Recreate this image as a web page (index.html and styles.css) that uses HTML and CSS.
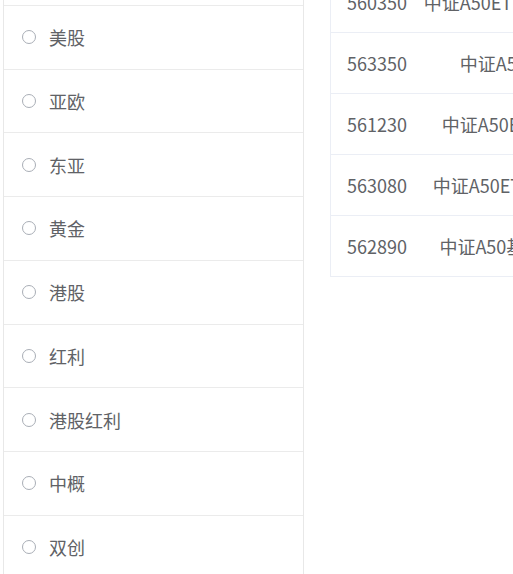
FILE: index.html
```html
<!DOCTYPE html>
<html lang="zh">
<head>
<meta charset="utf-8">
<link rel="stylesheet" href="styles.css">
</head>
<body>
<div class="page">
  <div class="panel">
    <ul class="options">
      <li class="option"><span class="radio"></span><span class="label">全部</span></li>
      <li class="option"><span class="radio"></span><span class="label">美股</span></li>
      <li class="option"><span class="radio"></span><span class="label">亚欧</span></li>
      <li class="option"><span class="radio"></span><span class="label">东亚</span></li>
      <li class="option"><span class="radio"></span><span class="label">黄金</span></li>
      <li class="option"><span class="radio"></span><span class="label">港股</span></li>
      <li class="option"><span class="radio"></span><span class="label">红利</span></li>
      <li class="option"><span class="radio"></span><span class="label">港股红利</span></li>
      <li class="option"><span class="radio"></span><span class="label">中概</span></li>
      <li class="option"><span class="radio"></span><span class="label">双创</span></li>
    </ul>
  </div>
  <div class="table-wrap">
    <table class="fund-table">
      <tbody>
        <tr><td class="code">560350</td><td class="name"><div class="name-inner">中证A50ETF工银瑞信</div></td></tr>
        <tr><td class="code">563350</td><td class="name"><div class="name-inner">中证A50ETF</div></td></tr>
        <tr><td class="code">561230</td><td class="name"><div class="name-inner">中证A50ETF华宝</div></td></tr>
        <tr><td class="code">563080</td><td class="name"><div class="name-inner">中证A50ETF易方达</div></td></tr>
        <tr><td class="code">562890</td><td class="name"><div class="name-inner">中证A50基金增强</div></td></tr>
      </tbody>
    </table>
  </div>
</div>
</body>
</html>
```

FILE: styles.css
```css
html, body {
  margin: 0;
  padding: 0;
  background: #ffffff;
  overflow: hidden;
}

body {
  font-family: "Noto Sans CJK SC", "Noto Sans", sans-serif;
  color: #606266;
  font-size: 18px;
}

.page {
  display: flex;
  align-items: flex-start;
  gap: 26px;
  padding-left: 3px;
  height: 574px;
}

.panel {
  flex: none;
  width: 299px;
  border-left: 1px solid #e8e8e8;
  border-right: 1px solid #e8e8e8;
  height: 640px;
  margin-top: -58px;
}

.options {
  list-style: none;
  margin: 0;
  padding: 0;
}

.option {
  display: flex;
  align-items: center;
  height: 62.75px;
  border-bottom: 1px solid #ebebeb;
  padding-left: 18px;
}

.radio {
  box-sizing: border-box;
  width: 14px;
  height: 14px;
  border: 1px solid #a9aeb6;
  border-radius: 50%;
  flex: none;
}

.label {
  margin-left: 13px;
  line-height: 1;
}

.table-wrap {
  flex: none;
  margin-top: -28px;
}

.fund-table {
  border-collapse: collapse;
  border-left: 1px solid #ebeef5;
  table-layout: fixed;
  width: 256px;
}

.fund-table td {
  height: 60px;
  padding: 0;
  border-bottom: 1px solid #ebeef5;
  white-space: nowrap;
  line-height: 1;
}

.fund-table .code {
  width: 84px;
  padding-left: 16px;
}

.fund-table .name {
  width: 153px;
}

.name-inner {
  display: flex;
  justify-content: center;
  white-space: nowrap;
}
```
